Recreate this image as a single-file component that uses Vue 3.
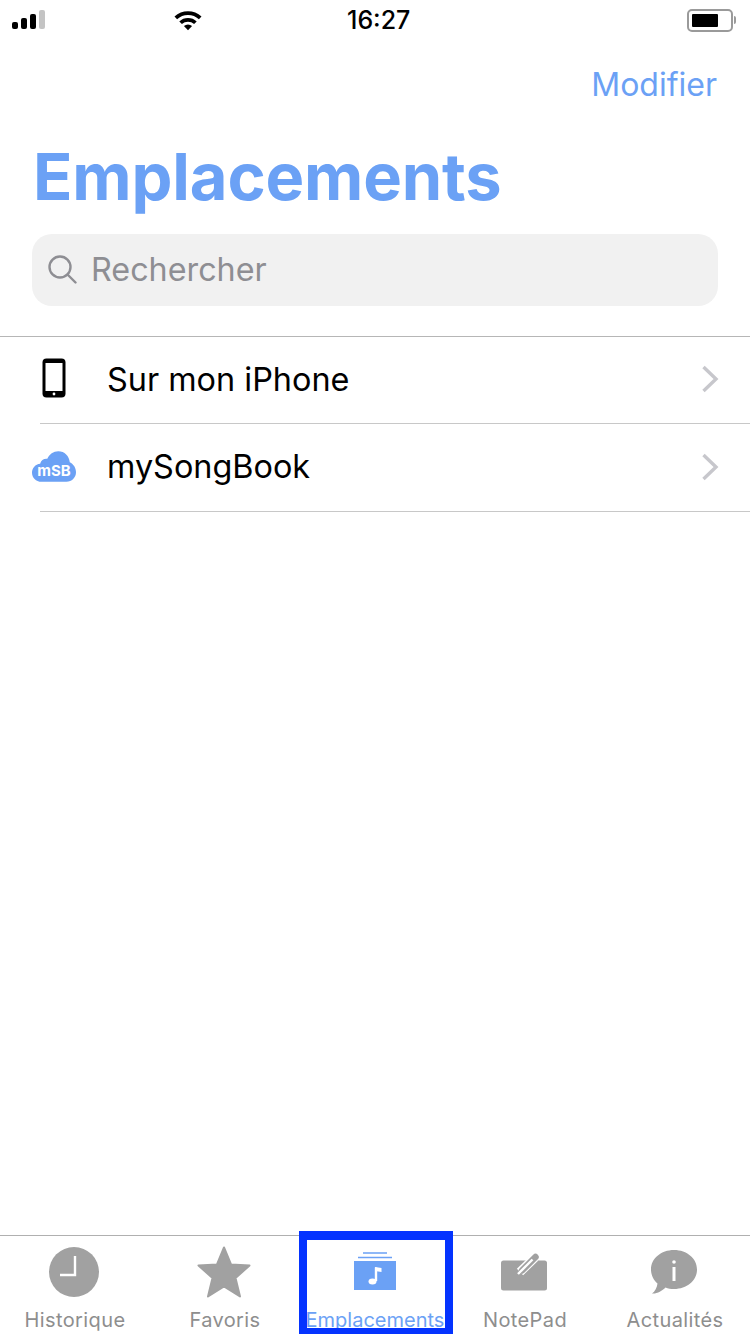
<template>
  <div class="screen">
    <div class="status-bar">
      <div class="status-left">
        <div class="signal">
          <span v-for="bar in signalBars" :key="bar.height" class="signal-bar" :class="{ off: bar.off }" :style="{ height: bar.height + 'px' }"></span>
        </div>
        <svg class="wifi" width="30" height="22" viewBox="0 0 30 22">
          <path d="M1.500 7.600a19.500 19.500 0 0 1 27 0l-2.600 2.700a15.700 15.700 0 0 0-21.800 0z" fill="#000" />
          <path d="M6.300 12.400a12.700 12.700 0 0 1 17.400 0l-2.600 2.700a9 9 0 0 0-12.200 0z" fill="#000" />
          <path d="M10.900 17a6 6 0 0 1 8.200 0L15 21.200z" fill="#000" />
        </svg>
      </div>
      <div class="clock">16:27</div>
      <div class="battery">
        <div class="battery-body"><div class="battery-level"></div></div>
        <div class="battery-tip"></div>
      </div>
    </div>

    <div class="nav">
      <span class="nav-action">Modifier</span>
    </div>
    <h1 class="title">Emplacements</h1>

    <div class="search">
      <svg width="29" height="29" viewBox="0 0 29 29" fill="none" stroke="#8e8e93" stroke-width="2.400">
        <circle cx="12" cy="12" r="10.500" />
        <path d="M19.500 19.500 L27.500 27.500" stroke-linecap="round" />
      </svg>
      <span class="search-text">Rechercher</span>
    </div>

    <div class="list">
      <div v-for="item in locations" :key="item.name" class="row">
        <svg v-if="item.icon === 'phone'" class="row-icon phone" width="24" height="40" viewBox="0 0 24 40">
          <rect x="0.500" y="0.500" width="23" height="39" rx="4" fill="#000" />
          <rect x="3.500" y="5" width="17" height="28" fill="#fff" />
          <circle cx="12" cy="36" r="1.400" fill="#fff" />
        </svg>
        <div v-else class="row-icon cloud">
          <svg width="44" height="33" viewBox="0 0 46 34">
            <path d="M10 33C4 33 0 28.500 0 23.500 0 18.500 3.500 14.500 8.500 14 9.500 10.500 12.500 8.500 16 9 18 4 22.500 1 27.500 1 34 1 39 6 39.500 12.500 43.500 14.500 46 18.500 46 23 46 28.500 41.500 33 36 33z" fill="#6ba1f5" />
          </svg>
          <span class="cloud-text">mSB</span>
        </div>
        <div class="row-body">
          <span class="row-label">{{ item.name }}</span>
          <svg class="chevron" width="18" height="28" viewBox="0 0 18 28" fill="none" stroke="#c7c7cc" stroke-width="3.400">
            <path d="M2.500 2 L15 14 L2.500 26" />
          </svg>
        </div>
      </div>
    </div>

    <div class="tabbar">
      <div v-for="tab in tabs" :key="tab.label" class="tab" :class="{ active: tab.active }">
        <div class="tab-icon">
          <svg v-if="tab.icon === 'clock'" width="50" height="50" viewBox="0 0 50 50">
            <circle cx="25" cy="25" r="25" fill="#a1a1a1" />
            <path d="M26 9 V28 H11" fill="none" stroke="#fff" stroke-width="2.400" />
          </svg>
          <svg v-else-if="tab.icon === 'star'" width="56" height="52" viewBox="0 0 56 52">
            <path d="M28 1.500 L35 18.500 L53.500 19.500 L39.500 32 L44 50.500 L28 40.500 L12 50.500 L16.500 32 L2.500 19.500 L21 18.500 Z" fill="#a1a1a1" stroke="#a1a1a1" stroke-width="2" stroke-linejoin="round" />
          </svg>
          <svg v-else-if="tab.icon === 'folder'" width="44" height="40" viewBox="0 0 44 40">
            <path d="M10 1 H34 M5 5.500 H39" stroke="#6ba1f5" stroke-width="1.400" />
            <rect x="1" y="9" width="42" height="29" fill="#6ba1f5" />
            <path d="M23 15.500 V29" stroke="#fff" stroke-width="2.400" />
            <ellipse cx="19.500" cy="29.500" rx="4" ry="3" fill="#fff" />
            <path d="M22 15 L28.500 16 V20 L22 19 Z" fill="#fff" />
          </svg>
          <svg v-else-if="tab.icon === 'note'" width="46" height="38" viewBox="0 0 46 38">
            <rect x="0" y="7.500" width="46" height="30" rx="2.500" fill="#a1a1a1" />
            <path d="M19 19 L34 4.500" stroke="#fff" stroke-width="9" />
            <path d="M21 17.500 L34.500 4" stroke="#a1a1a1" stroke-width="6.500" stroke-linecap="round" />
            <path d="M17 21 L31.500 6.500" stroke="#fff" stroke-width="2.400" />
          </svg>
          <svg v-else width="46" height="46" viewBox="0 0 46 46">
            <path d="M23 1 C36 1 46 9.500 46 20.500 C46 31.500 36 40 23 40 C20 40 17 39.500 14.500 38.500 C11 42 6 45 1 44.500 C4 42.500 6 38.500 6.500 34.500 C2.500 31 0 26 0 20.500 C0 9.500 10 1 23 1 Z" fill="#a1a1a1" />
            <circle cx="23" cy="13" r="1.800" fill="#fff" />
            <rect x="21.500" y="18" width="3" height="14" fill="#fff" />
          </svg>
        </div>
        <span class="tab-label">{{ tab.label }}</span>
      </div>
      <div class="highlight"></div>
    </div>
  </div>
</template>

<script setup>
const signalBars = [
  { height: 7 },
  { height: 11 },
  { height: 15 },
  { height: 19, off: true }
]

const locations = [
  { name: 'Sur mon iPhone', icon: 'phone' },
  { name: 'mySongBook', icon: 'cloud' }
]

const tabs = [
  { label: 'Historique', icon: 'clock' },
  { label: 'Favoris', icon: 'star' },
  { label: 'Emplacements', icon: 'folder', active: true },
  { label: 'NotePad', icon: 'note' },
  { label: 'Actualités', icon: 'info' }
]
</script>

<style>
html,
body {
  margin: 0;
  background: #fff;
}
</style>

<style scoped>
.screen {
  width: 750px;
  height: 1334px;
  display: flex;
  flex-direction: column;
  overflow: hidden;
  background: #fff;
  font-family: Inter, "Liberation Sans", sans-serif;
  color: #000;
}

.status-bar {
  height: 40px;
  flex: none;
  display: flex;
  align-items: center;
  padding-left: 12px;
}

.status-left {
  width: 191px;
  flex: none;
  display: flex;
  align-items: center;
  justify-content: space-between;
}

.signal {
  display: flex;
  align-items: flex-end;
  gap: 3px;
  height: 19px;
  margin-bottom: 1px;
}

.signal-bar {
  width: 6px;
  border-radius: 2px;
  background: #000;
}

.signal-bar.off {
  background: #c4c4c4;
}

.wifi {
  margin-bottom: 1px;
}

.clock {
  width: 64px;
  flex: none;
  margin-left: 144px;
  font-size: 25px;
  font-weight: 500;
}

.battery {
  display: flex;
  align-items: center;
  gap: 1px;
  margin-left: 276px;
}

.battery-body {
  width: 46px;
  height: 23px;
  box-sizing: border-box;
  padding: 3px;
  border: 2px solid #9a9a9a;
  border-radius: 5px;
}

.battery-level {
  width: 26px;
  height: 100%;
  background: #000;
  border-radius: 1px;
}

.battery-tip {
  width: 2px;
  height: 8px;
  background: #9a9a9a;
  border-radius: 0 2px 2px 0;
}

.nav {
  height: 88px;
  flex: none;
  display: flex;
  justify-content: flex-end;
  align-items: center;
  padding-right: 33px;
}

.nav-action {
  font-size: 32px;
  color: #6ba1f5;
}

.title {
  margin: 0 0 0 33px;
  height: 106px;
  flex: none;
  font-size: 65px;
  line-height: 98px;
  font-weight: 700;
  letter-spacing: -0.15px;
  color: #6ba1f5;
}

.search {
  flex: none;
  height: 72px;
  margin: 0 32px;
  padding: 0 0 2px 16px;
  box-sizing: border-box;
  display: flex;
  align-items: center;
  gap: 14px;
  border-radius: 20px;
  background: #f1f1f1;
}

.search-text {
  font-size: 32.300px;
  color: #8e8e93;
}

.list {
  margin-top: 30px;
  flex: none;
  border-top: 1px solid #b6b6b6;
}

.row {
  height: 87px;
  display: flex;
  position: relative;
}

.row + .row {
  height: 88px;
}

.row-icon {
  position: absolute;
}

.phone {
  left: 42px;
  top: 21px;
}

.cloud {
  left: 32px;
  top: 26px;
  width: 44px;
  height: 33px;
}

.cloud svg {
  display: block;
}

.cloud-text {
  position: absolute;
  left: 0;
  right: 0;
  bottom: 2px;
  text-align: center;
  font-size: 15px;
  font-weight: 700;
  line-height: 20px;
  color: #fff;
}

.row-body {
  flex: 1;
  margin-left: 40px;
  display: flex;
  align-items: center;
  justify-content: space-between;
  padding: 0 31px 2px 67px;
  border-bottom: 1px solid #c8c8c8;
}

.row-label {
  font-size: 32.400px;
  color: #000;
}

.tabbar {
  margin-top: auto;
  height: 98px;
  flex: none;
  display: flex;
  position: relative;
  border-top: 1px solid #b0b0b0;
}

.tab {
  width: 150px;
  display: flex;
  flex-direction: column;
  align-items: center;
  color: #8e8e8e;
}

.tab-icon {
  height: 72px;
  padding-right: 2px;
  display: flex;
  align-items: center;
  justify-content: center;
}

.tab-label {
  font-size: 20px;
  line-height: 24px;
  letter-spacing: 0.4px;
}

.tab.active {
  color: #6ba1f5;
}

.tab.active .tab-icon {
  padding-right: 0;
}

.tab.active .tab-label {
  letter-spacing: 0;
}

.highlight {
  position: absolute;
  left: 299px;
  top: -5px;
  width: 154px;
  height: 103px;
  box-sizing: border-box;
  border: 8px solid #0433ff;
  border-top-width: 9px;
  border-bottom-width: 6px;
}
</style>
